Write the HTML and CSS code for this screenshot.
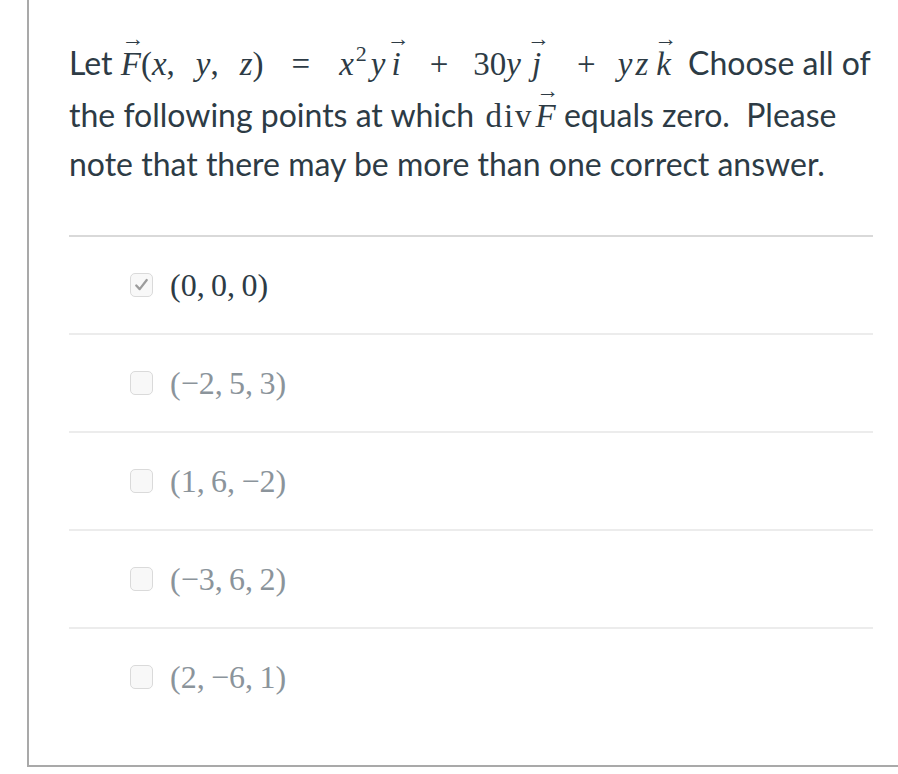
FILE: index.html
```html
<!DOCTYPE html>
<html>
<head>
<meta charset="utf-8">
<link rel="stylesheet" href="styles.css">
</head>
<body>
<div class="frame">
  <div class="question">
    <p class="prompt">Let <span class="m eq"><span class="vec vec-f"><i>F</i></span>(<i>x</i><span class="c">,</span><i>y</i><span class="c">,</span><i>z</i>)<span class="op rel">=</span><i>x</i><sup>2</sup><i>y</i><span class="vec vec-i"><i>i</i></span><span class="op op1">+</span>30<i>y</i><span class="vec vec-j"><i>j</i></span><span class="op op2">+</span><i>y</i><i class="z">z</i><span class="vec vec-k"><i>k</i></span></span> Choose all of the following points at which <span class="m"><span class="div">div</span><span class="vec vec-f"><i>F</i></span></span> equals zero.&nbsp; Please note that there may be more than one correct answer.</p>
  </div>
  <ul class="answers">
    <li class="answer selected"><span class="box"><svg viewBox="0 0 22 22" width="22" height="22"><path d="M5.5 11.5l3.6 3.8L16.5 5.8" fill="none" stroke="#9c9c9c" stroke-width="2.4" stroke-linecap="round" stroke-linejoin="round"/></svg></span><span class="m val">(0,&#8201;0,&#8201;0)</span></li>
    <li class="answer"><span class="box"></span><span class="m val">(&minus;2,&#8201;5,&#8201;3)</span></li>
    <li class="answer"><span class="box"></span><span class="m val">(1,&#8201;6,&#8201;&minus;2)</span></li>
    <li class="answer"><span class="box"></span><span class="m val">(&minus;3,&#8201;6,&#8201;2)</span></li>
    <li class="answer"><span class="box"></span><span class="m val">(2,&#8201;&minus;6,&#8201;1)</span></li>
  </ul>
</div>
</body>
</html>
```
FILE: styles.css
```css
html, body {
  margin: 0;
  padding: 0;
  background: #fff;
}
.frame {
  margin-left: 27px;
  height: 765px;
  border-left: 2px solid #a9a9a9;
  border-bottom: 2px solid #a9a9a9;
  padding: 0 25px 0 40px;
  color: #2d3b45;
  font-family: Lato, "Liberation Sans", sans-serif;
}
.question {
  padding-top: 38px;
  padding-bottom: 47px;
  border-bottom: 2px solid #d9d9d9;
}
.prompt {
  margin: 0;
  font-size: 32px;
  line-height: 48px;
}
.m {
  font-family: "Liberation Serif", "Times New Roman", serif;
  font-size: 33px;
}
.m.eq {
  line-height: 53px;
}
.m i {
  font-style: italic;
}
.m sup {
  font-size: 22px;
  line-height: 0;
  vertical-align: 14px;
  margin: 0 4px 0 2px;
}
.m .c {
  margin-right: 21px;
}
.op {
  display: inline-block;
}
.op.rel {
  margin: 0 29px 0 28px;
}
.op.op1 {
  margin: 0 25px 0 29px;
}
.op.op2 {
  margin: 0 22px 0 36px;
}
.z {
  margin-left: 3px;
}
.div {
  letter-spacing: 2px;
  margin: 0 2px 0 3px;
}
.vec {
  position: relative;
  display: inline-block;
  line-height: 32px;
}
.vec-i {
  margin-left: 6px;
}
.vec-j {
  margin-left: 11px;
}
.vec-k {
  margin-left: 8px;
  margin-right: 9px;
}
.vec::before {
  content: "\2192";
  position: absolute;
  left: 50%;
  top: -20px;
  transform: translateX(-42%);
  font-style: normal;
  font-size: 23px;
  line-height: 22px;
}
.answers {
  list-style: none;
  margin: 0;
  padding: 0;
}
.answer {
  height: 96px;
  display: flex;
  align-items: center;
  padding-left: 61px;
  border-bottom: 2px solid #ececec;
  color: #8b949b;
}
.answer:last-child {
  border-bottom: none;
}
.answer.selected {
  color: #2d3b45;
}
.box {
  box-sizing: border-box;
  width: 23px;
  height: 24px;
  border: 1px solid #dadada;
  border-radius: 5px;
  background: #f8f8f8;
  display: flex;
  align-items: center;
  justify-content: center;
  margin-right: 17px;
}
.val {
  font-size: 32px;
  line-height: normal;
}
```
